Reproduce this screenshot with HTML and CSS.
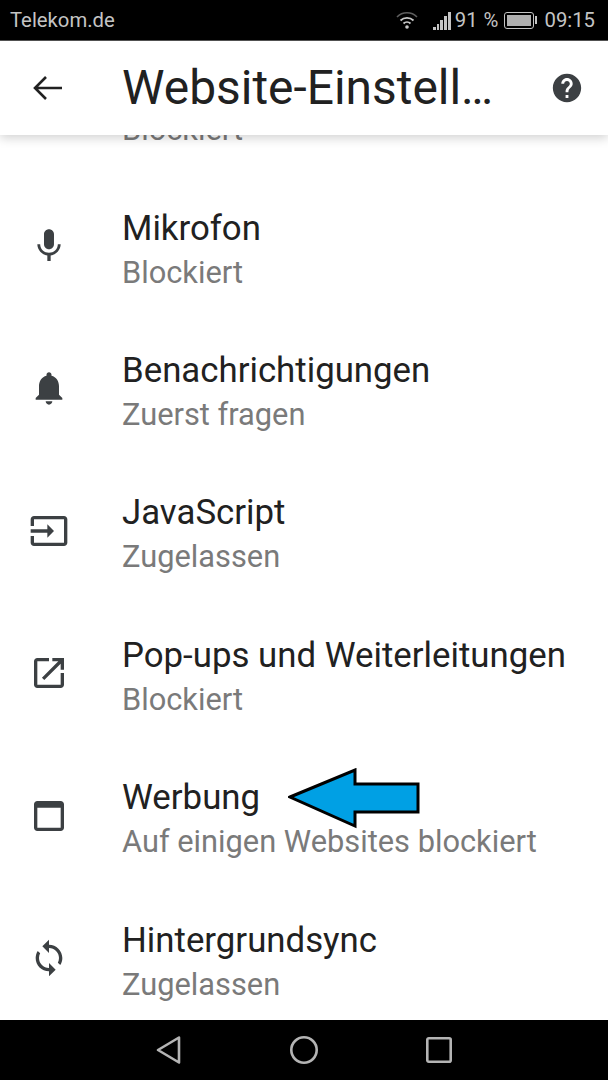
FILE: index.html
```html
<!DOCTYPE html>
<html lang="de">
<head>
  <meta charset="UTF-8" />
  <meta name="viewport" content="width=device-width, initial-scale=1.0" />
  <title>Website-Einstellungen</title>
  <link rel="stylesheet" href="styles.css">
</head>
<body>
  <div class="screen">
    <div class="statusBar">
      <span class="carrier">Telekom.de</span>
      <div class="statusRight">
        <svg class="wifi" viewBox="0 0 24 20" width="24" height="20">
          <path d="M2 7a14 14 0 0 1 20 0" fill="none" stroke="#5e5e5e" stroke-width="1.6"/>
          <path d="M5.500 10.500a9.500 9.500 0 0 1 13 0" fill="none" stroke="#c8c8c8" stroke-width="1.8"/>
          <path d="M8.500 13.500a5 5 0 0 1 7 0" fill="none" stroke="#c8c8c8" stroke-width="1.8"/>
          <circle cx="12" cy="17" r="1.800" fill="#c8c8c8"/>
        </svg>
        <div class="signal">
          <i class="b1"></i><i class="b2"></i><i class="b3"></i><i class="b4"></i><i class="b5"></i>
        </div>
        <span class="percent">91 %</span>
        <div class="battery"><div class="batteryFill"></div></div>
        <div class="batteryTip"></div>
        <span class="clock">09:15</span>
      </div>
    </div>

    <div class="toolbar">
      <svg class="backIcon" viewBox="0 0 30 26" width="30" height="26">
        <path d="M29 13H2M13 2 2 13l11 11" fill="none" stroke="#212121" stroke-width="2.600"/>
      </svg>
      <h1 class="pageTitle">Website-Einstell…</h1>
      <svg class="helpIcon" viewBox="0 0 24 24" width="34" height="34">
        <path fill="#3c4043" d="M12 2C6.480 2 2 6.480 2 12s4.480 10 10 10 10-4.480 10-10S17.520 2 12 2zm1 17h-2v-2h2v2zm2.070-7.750l-.9.920C13.450 12.900 13 13.500 13 15h-2v-.5c0-1.100.45-2.100 1.170-2.830l1.240-1.260c.37-.36.59-.86.59-1.410 0-1.100-.9-2-2-2s-2 .9-2 2H8c0-2.210 1.790-4 4-4s4 1.790 4 4c0 .88-.36 1.680-.93 2.250z"/>
      </svg>
    </div>

    <div class="listArea">
      <div class="list">
        <div class="row">
          <div class="rowIcon"></div>
          <div class="rowText">
            <div class="rowTitle">&nbsp;</div>
            <div class="rowSub">Blockiert</div>
          </div>
        </div>
        <div class="row">
          <svg class="rowIcon" viewBox="0 0 24 24"><path d="M12 14c1.660 0 2.990-1.340 2.990-3L15 5c0-1.660-1.340-3-3-3S9 3.340 9 5v6c0 1.660 1.340 3 3 3zm5.300-3c0 3-2.540 5.100-5.300 5.100S6.700 14 6.700 11H5c0 3.410 2.720 6.230 6 6.720V21h2v-3.280c3.280-.48 6-3.300 6-6.720h-1.700z"/></svg>
          <div class="rowText">
            <div class="rowTitle">Mikrofon</div>
            <div class="rowSub">Blockiert</div>
          </div>
        </div>
        <div class="row">
          <svg class="rowIcon" viewBox="0 0 24 24"><path d="M12 22c1.100 0 2-.9 2-2h-4c0 1.100.89 2 2 2zm6-6v-5c0-3.070-1.640-5.640-4.500-6.320V4c0-.83-.67-1.500-1.500-1.500s-1.500.67-1.500 1.500v.68C7.630 5.360 6 7.920 6 11v5l-2 2v1h16v-1l-2-2z"/></svg>
          <div class="rowText">
            <div class="rowTitle">Benachrichtigungen</div>
            <div class="rowSub">Zuerst fragen</div>
          </div>
        </div>
        <div class="row">
          <svg class="rowIcon" viewBox="0 0 24 24"><path d="M21 3.010H3c-1.100 0-2 .9-2 2V9h2V4.990h18v14.030H3V15H1v4.010c0 1.100.9 1.980 2 1.980h18c1.100 0 2-.88 2-1.980v-14c0-1.110-.9-2-2-2zM11 16l4-4-4-4v3H1v2h10v3z"/></svg>
          <div class="rowText">
            <div class="rowTitle">JavaScript</div>
            <div class="rowSub">Zugelassen</div>
          </div>
        </div>
        <div class="row">
          <svg class="rowIcon" viewBox="0 0 24 24"><path d="M19 19H5V5h7V3H5c-1.110 0-2 .9-2 2v14c0 1.100.89 2 2 2h14c1.100 0 2-.9 2-2v-7h-2v7zM14 3v2h3.590l-9.830 9.830 1.410 1.410L19 6.410V10h2V3h-7z"/></svg>
          <div class="rowText">
            <div class="rowTitle">Pop-ups und Weiterleitungen</div>
            <div class="rowSub">Blockiert</div>
          </div>
        </div>
        <div class="row">
          <svg class="rowIcon" viewBox="0 0 24 24"><path d="M19 3H5c-1.110 0-2 .9-2 2v14c0 1.100.89 2 2 2h14c1.100 0 2-.9 2-2V5c0-1.100-.89-2-2-2zm0 16H5V7h14v12z"/></svg>
          <div class="rowText">
            <div class="rowTitle">Werbung</div>
            <div class="rowSub">Auf einigen Websites blockiert</div>
          </div>
        </div>
        <div class="row">
          <svg class="rowIcon" viewBox="0 0 24 24"><path d="M12 4V1L8 5l4 4V6c3.310 0 6 2.690 6 6 0 1.010-.25 1.970-.7 2.800l1.460 1.460C19.540 15.030 20 13.570 20 12c0-4.420-3.580-8-8-8zm0 14c-3.310 0-6-2.690-6-6 0-1.010.25-1.970.7-2.800L5.240 7.740C4.460 8.970 4 10.430 4 12c0 4.420 3.580 8 8 8v3l4-4-4-4v3z"/></svg>
          <div class="rowText">
            <div class="rowTitle">Hintergrundsync</div>
            <div class="rowSub">Zugelassen</div>
          </div>
        </div>
      </div>
      <svg class="callout" viewBox="0 0 134 62" width="134" height="62">
        <path d="M2 29 67 2V16H130V44H67V58Z" fill="#00a0e4" stroke="#000" stroke-width="3"/>
      </svg>
    </div>

    <div class="navBar">
      <svg viewBox="0 0 28 30" width="28" height="30"><path d="M24 2.500 3 15l21 12.500Z" fill="none" stroke="#b4b4b4" stroke-width="2.600" stroke-linejoin="round"/></svg>
      <svg viewBox="0 0 30 30" width="30" height="30"><circle cx="15" cy="15" r="12.700" fill="none" stroke="#b4b4b4" stroke-width="2.600"/></svg>
      <svg viewBox="0 0 28 28" width="28" height="28"><rect x="2.300" y="2.300" width="23.400" height="23.400" rx="1.500" fill="none" stroke="#b4b4b4" stroke-width="2.600"/></svg>
    </div>
  </div>
</body>
</html>
```

FILE: styles.css
```css
* {
  box-sizing: border-box;
}
body {
  margin: 0;
  font-family: Roboto, 'Noto Sans', sans-serif;
  background: #000;
}
.screen {
  width: 608px;
  height: 1080px;
  display: flex;
  flex-direction: column;
  overflow: hidden;
  background: #fff;
}
.statusBar {
  height: 41px;
  flex: none;
  background: #000;
  color: #c4c4c4;
  font-size: 20.300px;
  display: flex;
  align-items: center;
  justify-content: space-between;
  padding: 0 13px 0 10px;
  border-bottom: 1px solid #555;
}
.statusRight {
  display: flex;
  align-items: center;
}
.wifi {
  margin-right: 14px;
}
.signal {
  display: flex;
  align-items: flex-end;
  gap: 1px;
  height: 19px;
  margin-right: 4px;
}
.signal i {
  display: block;
  width: 2.800px;
  background: #c4c4c4;
}
.signal .b1 { height: 3px; }
.signal .b2 { height: 6px; }
.signal .b3 { height: 10px; }
.signal .b4 { height: 14px; }
.signal .b5 { height: 18px; }
.percent {
  margin-right: 6px;
  word-spacing: 1px;
}
.battery {
  width: 30px;
  height: 17px;
  border: 1px solid #c4c4c4;
  border-radius: 3px;
  padding: 2px;
}
.batteryFill {
  height: 100%;
  background: #b0b0b0;
}
.batteryTip {
  width: 2px;
  height: 8px;
  background: #c4c4c4;
  margin: 0 7px 0 1px;
}
.toolbar {
  height: 94px;
  flex: none;
  background: #fff;
  display: flex;
  align-items: center;
  position: relative;
  z-index: 2;
  box-shadow: 0 3px 10px rgba(0, 0, 0, 0.18);
}
.backIcon {
  margin-left: 33px;
  flex: none;
}
.pageTitle {
  flex: 1;
  margin: 0 0 0 59px;
  font-size: 47.900px;
  font-weight: 400;
  color: #212121;
  white-space: nowrap;
}
.helpIcon {
  flex: none;
  margin-right: 24px;
}
.listArea {
  flex: 1;
  min-height: 0;
  position: relative;
  overflow: hidden;
  background: #fff;
}
.list {
  margin-top: -98.500px;
}
.row {
  height: 142.400px;
  display: flex;
  align-items: center;
  padding-left: 29px;
}
.rowIcon {
  width: 40px;
  height: 40px;
  flex: none;
  fill: #3c4043;
  margin-bottom: 8px;
}
.rowText {
  margin-left: 53px;
}
.rowTitle {
  font-size: 34.800px;
  line-height: 44px;
  color: #212121;
}
.rowSub {
  font-size: 30.800px;
  line-height: 44px;
  margin-top: 1px;
  color: #7a7a7a;
}
.callout {
  position: absolute;
  left: 288px;
  top: 633px;
}
.navBar {
  height: 60px;
  flex: none;
  background: #000;
  display: flex;
  align-items: center;
  padding-left: 155px;
  gap: 106px;
}
```
